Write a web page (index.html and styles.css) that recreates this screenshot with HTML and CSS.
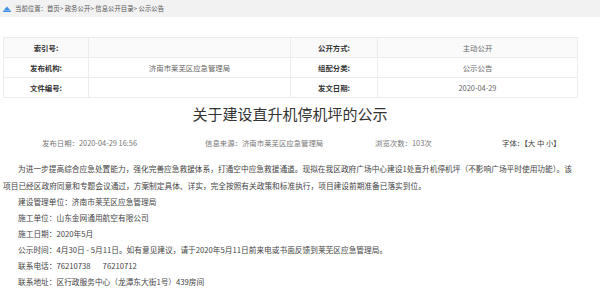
FILE: index.html
```html
<!DOCTYPE html>
<html lang="zh-CN">
<head>
  <meta charset="UTF-8" />
  <title>关于建设直升机停机坪的公示</title>
  <link rel="stylesheet" href="styles.css">
</head>
<body>
  <div class="crumb">
    <svg class="crumb-icon" width="8" height="6" viewBox="0 0 8 6">
      <path d="M4 0.5 L7.5 4.5 L0.5 4.5 Z" fill="#3a8ee6"/>
      <rect x="0" y="4.8" width="8" height="1.2" fill="#3a8ee6"/>
    </svg>
    <span>当前位置：首页&gt; 政务公开&gt; 信息公开目录&gt; 公示公告</span>
  </div>

  <div class="page">
    <table class="info">
      <colgroup>
        <col class="c-label" />
        <col class="c-value" />
        <col class="c-label2" />
        <col class="c-value2" />
      </colgroup>
      <tr class="first">
        <th>索引号:</th>
        <td></td>
        <th>公开方式:</th>
        <td>主动公开</td>
      </tr>
      <tr>
        <th>发布机构:</th>
        <td>济南市莱芜区应急管理局</td>
        <th>组配分类:</th>
        <td>公示公告</td>
      </tr>
      <tr>
        <th>文件编号:</th>
        <td></td>
        <th>发文日期:</th>
        <td>2020-04-29</td>
      </tr>
    </table>

    <h1 class="title">关于建设直升机停机坪的公示</h1>

    <div class="meta">
      <span>发布日期：2020-04-29 16:56</span>
      <span>信息来源：济南市莱芜区应急管理局</span>
      <span>浏览次数：103次</span>
      <span class="font-size">字体：【大 中 小】</span>
    </div>

    <div class="content">
      <p>为进一步提高综合应急处置能力，强化完善应急救援体系，打通空中应急救援通道。现拟在我区政府广场中心建设1处直升机停机坪（不影响广场平时使用功能）。该项目已经区政府同意和专题会议通过，方案制定具体、详实，完全按照有关政策和标准执行，项目建设前期准备已落实到位。</p>
      <p>建设管理单位：济南市莱芜区应急管理局</p>
      <p>施工单位：山东金网通用航空有限公司</p>
      <p>施工日期：2020年5月</p>
      <p>公示时间：4月30日 - 5月11日。如有意见建议，请于2020年5月11日前来电或书面反馈到莱芜区应急管理局。</p>
      <p>联系电话：76210738&nbsp;&nbsp;&nbsp;&nbsp;&nbsp;&nbsp;&nbsp;76210712</p>
      <p>联系地址：区行政服务中心（龙潭东大街1号）439房间</p>
    </div>
  </div>
</body>
</html>
```

FILE: styles.css
```css
:root {
  --color-text: #333;
  --color-subtle: #777;
  --color-line: #ececec;
  --font: "Noto Sans CJK SC", "Liberation Sans", sans-serif;
}
* {
  box-sizing: border-box;
}
body {
  margin: 0;
  font-family: var(--font);
  color: var(--color-text);
  background: #fff;
}
.crumb {
  height: 17px;
  background: #f2f2f2;
  display: flex;
  align-items: center;
  gap: 4px;
  padding-left: 3px;
  font-size: 6.4px;
  color: #555;
}
.crumb-icon {
  display: block;
}
.page {
  width: 580px;
  padding: 0 3px;
}
.info {
  margin-top: 20px;
  width: 574px;
  border-collapse: collapse;
  table-layout: fixed;
  font-size: 7.4px;
}
.c-label { width: 85px; }
.c-value { width: 202px; }
.c-label2 { width: 87px; }
.c-value2 { width: 200px; }
.info th,
.info td {
  height: 20px;
  padding: 0 4px;
  border: 1px solid var(--color-line);
  text-align: center;
}
.info th {
  font-weight: bold;
  color: #333;
}
.info td {
  color: #666;
}
.info .first th,
.info .first td {
  background: #fafafa;
}
.title {
  margin: 6px 0 0;
  text-align: center;
  font-size: 15px;
  font-weight: normal;
  line-height: 20px;
  color: #333;
}
.meta {
  display: grid;
  grid-template-columns: 163px 170px 127px auto;
  padding-left: 39px;
  margin-top: 13px;
  font-size: 7.4px;
  line-height: 12px;
  color: var(--color-subtle);
}
.font-size {
  color: #444;
}
.content {
  margin-top: 11px;
  font-size: 7.7px;
  line-height: 16px;
  color: #444;
}
.content p {
  margin: 0;
  text-indent: 15px;
}
.content p:first-child {
  line-height: 17px;
}
```
